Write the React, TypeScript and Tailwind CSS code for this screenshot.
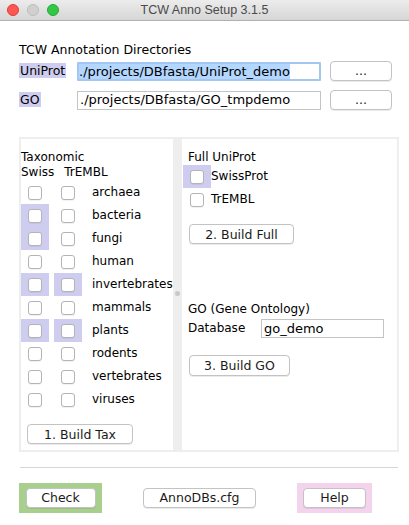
import React from 'react';

const LAV = 'bg-[#cfcdef]';

const taxa = [
  { name: 'archaea', swiss: false, trembl: false },
  { name: 'bacteria', swiss: true, trembl: false },
  { name: 'fungi', swiss: true, trembl: false },
  { name: 'human', swiss: false, trembl: false },
  { name: 'invertebrates', swiss: true, trembl: true },
  { name: 'mammals', swiss: false, trembl: false },
  { name: 'plants', swiss: true, trembl: true },
  { name: 'rodents', swiss: false, trembl: false },
  { name: 'vertebrates', swiss: false, trembl: false },
  { name: 'viruses', swiss: false, trembl: false },
];

function Box() {
  return <span className="block w-[14px] h-[14px] rounded-[3px] border border-[#b4b4b4] bg-white shadow-[0_1px_0_rgba(0,0,0,0.05)]" />;
}

function Cell({ hl }: { hl?: boolean }) {
  return (
    <div className={`w-[28px] h-[23px] flex items-center justify-center ${hl ? LAV : ''}`}>
      <Box />
    </div>
  );
}

function Btn({ label, className }: { label: string; className?: string }) {
  return (
    <div
      className={`h-[20px] flex items-center justify-center bg-white border border-[#c3c3c3] rounded-[4px] shadow-[0_1px_0_rgba(0,0,0,0.08)] text-[12.5px] text-[#1a1a1a] ${className ?? ''}`}
    >
      {label}
    </div>
  );
}

export default function App() {
  return (
    <div className="w-[409px] h-[525px] bg-white font-['DejaVu_Sans',sans-serif] text-[12px] text-black overflow-hidden">
      {/* title bar */}
      <div className="relative h-[21px] bg-gradient-to-b from-[#ececec] to-[#d6d6d6] border-b border-[#b1b1b1] flex items-center justify-center">
        <div className="absolute left-[7px] top-[4px] flex gap-[8px]">
          <span className="w-[12px] h-[12px] rounded-full bg-[#fc5753] border border-[#df3d35]" />
          <span className="w-[12px] h-[12px] rounded-full bg-[#d0d0d0] border border-[#bcbcbc]" />
          <span className="w-[12px] h-[12px] rounded-full bg-[#33c748] border border-[#27aa35]" />
        </div>
        <span className="font-['Liberation_Sans',sans-serif] text-[12.5px] text-[#4a4a4a]">TCW Anno Setup 3.1.5</span>
      </div>

      {/* directories */}
      <div className="pl-[19px] pt-[21px]">
        <div className="leading-[15px] text-[12.5px]">TCW Annotation Directories</div>
        <div className="mt-[4px] flex items-center h-[20px]">
          <div className="w-[58px]">
            <span className={`${LAV} px-[1px] leading-[15px] inline-block text-[12.5px]`}>UniProt</span>
          </div>
          <div className="w-[244px] h-[19px] border-2 border-[#a4c6f3] rounded-[1px] flex items-center text-[13px] overflow-hidden">
            <span className="bg-[#b3d7ff] leading-[15px]">./projects/DBfasta/UniProt_demo</span>
          </div>
          <Btn label="..." className="ml-[9px] w-[62px]" />
        </div>
        <div className="mt-[9px] flex items-center h-[20px]">
          <div className="w-[58px]">
            <span className={`${LAV} px-[1px] leading-[15px] inline-block text-[12.5px]`}>GO</span>
          </div>
          <div className="w-[244px] h-[19px] border border-[#c4c4c4] flex items-center pl-[2px] text-[13px]">
            ./projects/DBfasta/GO_tmpdemo
          </div>
          <Btn label="..." className="ml-[9px] w-[62px]" />
        </div>
      </div>

      {/* split pane */}
      <div className="ml-[19px] mt-[27px] w-[380px] h-[315px] border-2 border-[#eeeeee] flex">
        <div className="w-[152px] pt-[11px] leading-[15px]">
          <div>Taxonomic</div>
          <div className="flex">
            <span>Swiss</span>
            <span className="ml-[10px]">TrEMBL</span>
          </div>
          <div className="mt-[1px]">
            {taxa.map((t) => (
              <div key={t.name} className="flex items-center h-[23px]">
                <Cell hl={t.swiss} />
                <div className="w-[5px]" />
                <Cell hl={t.trembl} />
                <span className="ml-[10px]">{t.name}</span>
              </div>
            ))}
          </div>
          <Btn label="1. Build Tax" className="mt-[13px] ml-[6px] w-[106px]" />
        </div>

        <div className="w-[9px] bg-[#eeeeee] relative">
          <span className="absolute left-[2px] top-[152px] w-[5px] h-[5px] rounded-full bg-[#c9c9c9]" />
        </div>

        <div className="flex-1 pt-[11px] pl-[1px] leading-[15px]">
          <div className="pl-[5px]">Full UniProt</div>
          <div className="flex items-center h-[23px]">
            <Cell hl />
            <span>SwissProt</span>
          </div>
          <div className="flex items-center h-[23px]">
            <Cell />
            <span>TrEMBL</span>
          </div>
          <Btn label="2. Build Full" className="mt-[13px] ml-[6px] w-[105px]" />

          <div className="pl-[5px] mt-[58px]">GO (Gene Ontology)</div>
          <div className="mt-[2px] flex items-center h-[19px] pl-[5px]">
            <span className="w-[73px]">Database</span>
            <div className="w-[123px] h-[19px] border border-[#c4c4c4] flex items-center pl-[2px] text-[13px]">go_demo</div>
          </div>
          <Btn label="3. Build GO" className="mt-[17px] ml-[6px] w-[101px] h-[21px]" />
        </div>
      </div>

      <div className="ml-[20px] mt-[15px] w-[378px] h-px bg-[#d6d6d6]" />

      <div className="ml-[19px] mt-[15px] w-[353px] flex justify-between">
        <div className="w-[83px] h-[30px] bg-[#a9cf8f] flex items-center justify-center">
          <Btn label="Check" className="w-[70px]" />
        </div>
        <div className="w-[113px] h-[30px] flex items-center">
          <Btn label="AnnoDBs.cfg" className="w-[113px]" />
        </div>
        <div className="w-[75px] h-[30px] bg-[#f3d4ec] flex items-center justify-center">
          <Btn label="Help" className="w-[63px]" />
        </div>
      </div>
    </div>
  );
}
